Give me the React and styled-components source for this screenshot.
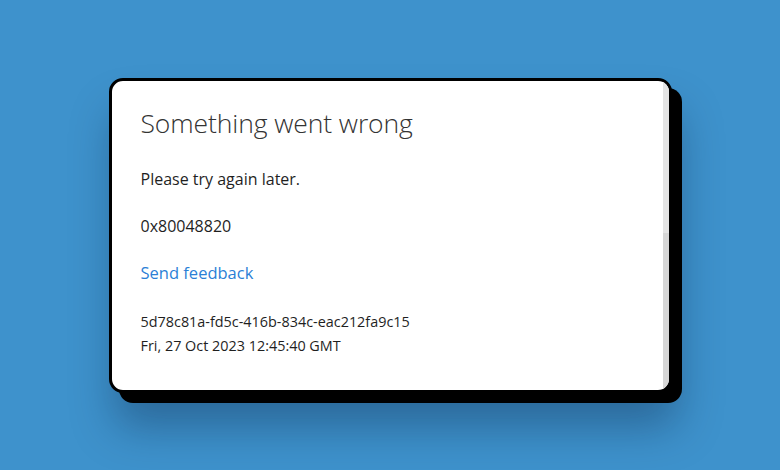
import styled, { createGlobalStyle } from "styled-components";

const GlobalStyle = createGlobalStyle`
  html, body {
    margin: 0;
    padding: 0;
    width: 100%;
    height: 100%;
    overflow: hidden;
  }
  body {
    font-family: "Open Sans", "Noto Sans", "Liberation Sans", sans-serif;
  }
`;

const Page = styled.div`
  width: 780px;
  height: 470px;
  display: flex;
  align-items: center;
  justify-content: center;
  background: #3e92cc;
`;

const Card = styled.div`
  width: 563px;
  height: 315px;
  box-sizing: border-box;
  border: 3px solid #000;
  border-radius: 14px;
  background: #fff;
  display: flex;
  overflow: hidden;
  box-shadow: 10px 10px 0 #000, 6px 34px 44px rgba(10, 30, 60, 0.35);
`;

const Content = styled.div`
  flex: 1;
  padding: 24px 29px 0 29px;
  display: flex;
  flex-direction: column;
  align-items: flex-start;
  color: #1f1f1f;
`;

const Title = styled.h1`
  margin: 0;
  font-size: 26.5px;
  line-height: 36px;
  font-weight: 300;
  color: #333;
  letter-spacing: -0.1px;
`;

const Line = styled.p`
  margin: ${(p) => p.$gap}px 0 0 0;
  font-size: 16px;
  line-height: 22px;
  color: #1f1f1f;
`;

const Feedback = styled.a`
  margin-top: 25px;
  font-size: 16.5px;
  line-height: 22px;
  color: #2b7fd6;
  text-decoration: none;
  cursor: pointer;
`;

const Meta = styled.div`
  margin-top: 26px;
  font-size: 14.4px;
  line-height: 24px;
  color: #1f1f1f;
`;

const Scrollbar = styled.div`
  width: 6px;
  display: flex;
  flex-direction: column;
  background: #d6d6d6;
`;

const Thumb = styled.div`
  height: 152px;
  background: #e4e4e4;
`;

export default function App() {
  return (
    <>
      <GlobalStyle />
      <Page>
        <Card>
          <Content>
            <Title>Something went wrong</Title>
            <Line $gap={27}>Please try again later.</Line>
            <Line $gap={25}>0x80048820</Line>
            <Feedback>Send feedback</Feedback>
            <Meta>
              5d78c81a-fd5c-416b-834c-eac212fa9c15
              <br />
              Fri, 27 Oct 2023 12:45:40 GMT
            </Meta>
          </Content>
          <Scrollbar>
            <Thumb />
          </Scrollbar>
        </Card>
      </Page>
    </>
  );
}
